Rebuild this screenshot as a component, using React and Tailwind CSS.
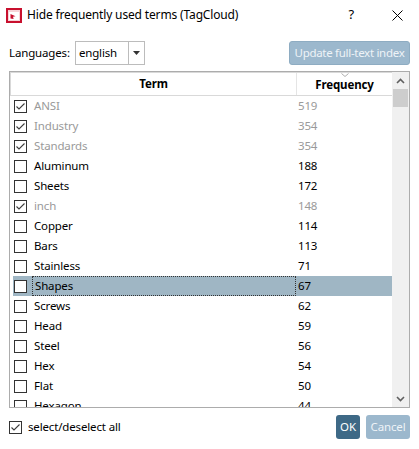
import React from 'react';

const rows = [
    { term: 'ANSI', freq: 519, checked: true },
    { term: 'Industry', freq: 354, checked: true },
    { term: 'Standards', freq: 354, checked: true },
    { term: 'Aluminum', freq: 188 },
    { term: 'Sheets', freq: 172 },
    { term: 'inch', freq: 148, checked: true },
    { term: 'Copper', freq: 114 },
    { term: 'Bars', freq: 113 },
    { term: 'Stainless', freq: 71 },
    { term: 'Shapes', freq: 67, selected: true },
    { term: 'Screws', freq: 62 },
    { term: 'Head', freq: 59 },
    { term: 'Steel', freq: 56 },
    { term: 'Hex', freq: 54 },
    { term: 'Flat', freq: 50 },
    { term: 'Hexagon', freq: 44 },
];

function CheckBox({ checked }) {
    return (
        <div className="w-[13px] h-[13px] border border-[#333333] bg-white flex items-center justify-center shrink-0">
            {checked && (
                <svg width="11" height="11" viewBox="0 0 11 11">
                    <path d="M1.5 5.5 L4 8 L9.5 2.5" fill="none" stroke="#3c3c3c" strokeWidth="1.1" />
                </svg>
            )}
        </div>
    );
}

export default function App() {
    return (
        <div
            className="w-[419px] h-[449px] bg-white flex flex-col overflow-hidden text-[11.5px] tracking-[-0.15px] text-black"
            style={{ fontFamily: '"Noto Sans", sans-serif' }}
        >
            {/* Title bar */}
            <div className="h-[30px] flex items-center shrink-0">
                <svg className="ml-[6px]" width="16" height="15" viewBox="0 0 16 15">
                    <rect x="0" y="0" width="16" height="15" fill="#c8102e" />
                    <rect x="2" y="2" width="12" height="11" fill="#f6d4d8" />
                    <rect x="3" y="4" width="10" height="8" fill="#ffffff" />
                    <path d="M4.5 6 L9.5 8.3 L7 8.8 L7.6 11 L4.5 10.4 Z" fill="#c8102e" />
                </svg>
                <span className="ml-[5px] text-[12px]">Hide frequently used terms (TagCloud)</span>
                <span className="ml-auto mr-[38px] text-[13px]">?</span>
                <svg className="mr-[16px]" width="11" height="11" viewBox="0 0 11 11">
                    <path d="M0.5 0.5 L10.5 10.5 M10.5 0.5 L0.5 10.5" stroke="#000" strokeWidth="1" />
                </svg>
            </div>

            {/* Language row */}
            <div className="flex items-center h-[24px] mt-[11px] px-[9px] shrink-0">
                <span>Languages:</span>
                <div className="ml-[5px] w-[70px] h-[24px] border border-[#bcbcbc] flex items-center">
                    <span className="flex-1 pl-[3px]">english</span>
                    <div className="w-[16px] h-full border-l border-[#bcbcbc] flex items-center justify-center">
                        <svg width="7" height="4" viewBox="0 0 7 4">
                            <path d="M0 0 H7 L3.5 4 Z" fill="#333" />
                        </svg>
                    </div>
                </div>
                <button className="ml-auto w-[121px] h-[24px] rounded-[3px] bg-[#9cb8cd] text-[#eef3f7] border border-[#8eacc2] whitespace-nowrap tracking-[-0.3px]">
                    Update full-text index
                </button>
            </div>

            {/* Table */}
            <div className="mx-[9px] mt-[6px] h-[337px] border border-[#acacac] flex shrink-0 overflow-hidden">
                <div className="flex-1 flex flex-col min-w-0">
                    <div className="h-[24px] flex shrink-0 border border-[#d9d9d9] border-r-0 font-bold">
                        <div className="w-[286px] flex items-center justify-center border-r border-[#e5e5e5]">Term</div>
                        <div className="flex-1 relative flex items-center justify-center pt-[1px]">
                            <svg className="absolute top-[0px] left-[44px]" width="8" height="4" viewBox="0 0 8 4">
                                <path d="M0.5 0.5 L4 3.5 L7.5 0.5" fill="none" stroke="#999" strokeWidth="0.8" />
                            </svg>
                            Frequency
                        </div>
                    </div>
                    <div className="flex flex-col pl-[3px]">
                        {rows.map((r) => (
                            <div
                                key={r.term}
                                className={`h-[20px] flex items-center shrink-0 ${r.selected ? 'bg-[#9fb6c4]' : ''} ${r.checked ? 'text-[#9a9a9a]' : 'text-black'}`}
                            >
                                <div className="w-[19px] pl-[1px] flex items-center">
                                    <CheckBox checked={r.checked} />
                                </div>
                                <div
                                    className={`w-[264px] h-full flex items-center pl-[2px] ${r.selected ? 'border border-dotted border-[#333]' : ''}`}
                                >
                                    {r.term}
                                </div>
                                <div className="flex-1 pl-[2px] mr-[2px]">{r.freq}</div>
                            </div>
                        ))}
                    </div>
                </div>
                {/* Scrollbar */}
                <div className="w-[17px] bg-[#f0f0f0] flex flex-col items-center shrink-0">
                    <div className="h-[17px] flex items-center justify-center">
                        <svg width="9" height="6" viewBox="0 0 9 6">
                            <path d="M1 5 L4.5 1.5 L8 5" fill="none" stroke="#606060" strokeWidth="1.6" />
                        </svg>
                    </div>
                    <div className="w-[15px] h-[18px] bg-[#cdcdcd]"></div>
                    <div className="flex-1"></div>
                    <div className="h-[17px] flex items-center justify-center">
                        <svg width="9" height="6" viewBox="0 0 9 6">
                            <path d="M1 1 L4.5 4.5 L8 1" fill="none" stroke="#606060" strokeWidth="1.6" />
                        </svg>
                    </div>
                </div>
            </div>

            {/* Footer */}
            <div className="flex items-center h-[24px] mt-[7px] px-[9px] shrink-0">
                <div className="flex items-center">
                    <div className="w-[13px] h-[13px] border border-[#333] flex items-center justify-center">
                        <svg width="11" height="11" viewBox="0 0 11 11">
                            <path d="M1.5 5.5 L4 8 L9.5 2.5" fill="none" stroke="#3c3c3c" strokeWidth="1.1" />
                        </svg>
                    </div>
                    <span className="ml-[6px]">select/deselect all</span>
                </div>
                <button className="ml-auto w-[24px] h-[24px] rounded-[3px] bg-[#3e6986] text-white">OK</button>
                <button className="ml-[6px] w-[44px] h-[24px] rounded-[3px] bg-[#9cb8cd] text-[#eef3f7]">Cancel</button>
            </div>
        </div>
    );
}
